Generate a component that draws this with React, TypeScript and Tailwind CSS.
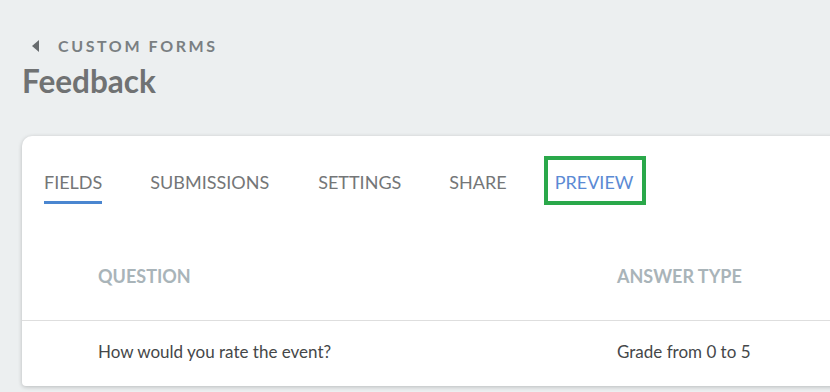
import React from 'react';

const tabs = [
  { label: 'FIELDS', ml: 'ml-0' },
  { label: 'SUBMISSIONS', ml: 'ml-[48px]' },
  { label: 'SETTINGS', ml: 'ml-[49px]' },
  { label: 'SHARE', ml: 'ml-[48px]' },
];

const App: React.FC = () => {
  return (
    <div
      className="w-[830px] h-[392px] overflow-hidden bg-[#eceff0] pt-[34px] pl-[22px]"
      style={{ fontFamily: 'Lato, "Open Sans", sans-serif' }}
    >
      {/* breadcrumb */}
      <div className="flex items-center h-[24px]">
        <svg width="8" height="12" viewBox="0 0 8 12" className="ml-[10px] mr-[18px]">
          <path d="M7 0 L0 6 L7 12 Z" fill="#676b6e" />
        </svg>
        <span className="text-[16px] leading-[24px] font-bold tracking-[2.6px] text-[#7a7f82]">
          CUSTOM FORMS
        </span>
      </div>
      <h1 className="mt-[4px] text-[31.5px] leading-[38px] font-bold text-[#707273]">Feedback</h1>

      {/* card */}
      <div className="mt-[36px] w-[830px] bg-white rounded-tl-[10px] rounded-bl-[4px] shadow-[0_1px_4px_rgba(0,0,0,0.22)]">
        <div className="flex pl-[22px] pt-[34px]">
          {tabs.map((t, i) => (
            <div key={t.label} className={`flex flex-col ${t.ml}`}>
              <span className="text-[18px] leading-[24px] text-[#747677]">{t.label}</span>
              <div className={`mt-[7px] h-[3px] ${i === 0 ? 'bg-[#4a86d0]' : 'bg-transparent'}`} />
            </div>
          ))}
          <div className="relative flex flex-col ml-[48px]">
            <span className="text-[18px] leading-[24px] text-[#5b8ad4]">PREVIEW</span>
            <div className="mt-[7px] h-[3px]" />
            <div className="absolute left-[-11px] right-[-13px] top-[-14px] bottom-[-1px] border-[4px] border-[#2aa84a]" />
          </div>
        </div>

        {/* table header */}
        <div className="flex pt-[60px] pb-[32px] text-[18px] leading-[24px] font-bold text-[#a9b4b9] border-b border-[#dedede]">
          <div className="pl-[76px] w-[595px]">QUESTION</div>
          <div>ANSWER TYPE</div>
        </div>

        {/* row */}
        <div className="flex pt-[19px] pb-[22px] text-[17px] leading-[24px] text-[#454749]">
          <div className="pl-[76px] w-[595px]">How would you rate the event?</div>
          <div>Grade from 0 to 5</div>
        </div>
      </div>
    </div>
  );
};

export default App;
